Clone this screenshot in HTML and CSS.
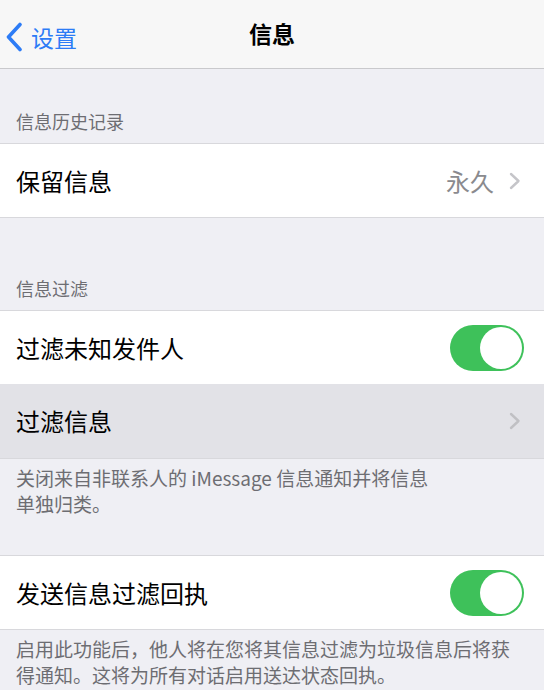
FILE: index.html
```html
<!DOCTYPE html>
<html lang="zh-CN">
<head>
<meta charset="utf-8">
<title>信息</title>
<link rel="stylesheet" href="styles.css">
</head>
<body>
<div class="screen">
  <header class="nav">
    <div class="nav-back">
      <svg class="back-icon" width="18" height="30" viewBox="0 0 18 30"><path d="M15 2.5 L3.5 15 L15 27.5" fill="none" stroke="#2d7cf6" stroke-width="3.6" stroke-linecap="round" stroke-linejoin="round"/></svg>
      <span>设置</span>
    </div>
    <div class="nav-title">信息</div>
  </header>

  <div class="section-header first">信息历史记录</div>
  <div class="group">
    <div class="row">
      <span class="label">保留信息</span>
      <span class="value">永久</span>
      <svg class="chevron" width="12" height="18" viewBox="0 0 12 18"><path d="M2 2 L9.5 9 L2 16" fill="none" stroke="#c5c5c9" stroke-width="2.4" stroke-linecap="round" stroke-linejoin="round"/></svg>
    </div>
  </div>

  <div class="section-header second">信息过滤</div>
  <div class="group">
    <div class="row">
      <span class="label">过滤未知发件人</span>
      <span class="toggle"><span class="knob"></span></span>
    </div>
    <div class="row highlighted">
      <span class="label">过滤信息</span>
      <svg class="chevron" width="12" height="18" viewBox="0 0 12 18"><path d="M2 2 L9.5 9 L2 16" fill="none" stroke="#c0c0c4" stroke-width="2.4" stroke-linecap="round" stroke-linejoin="round"/></svg>
    </div>
  </div>
  <div class="section-footer first">关闭来自非联系人的 iMessage 信息通知并将信息<br>单独归类。</div>

  <div class="group">
    <div class="row">
      <span class="label">发送信息过滤回执</span>
      <span class="toggle"><span class="knob"></span></span>
    </div>
  </div>
  <div class="section-footer second">启用此功能后，他人将在您将其信息过滤为垃圾信息后将获得通知。这将为所有对话启用送达状态回执。</div>
</div>
</body>
</html>
```

FILE: styles.css
```css
html, body {
  margin: 0;
  padding: 0;
  background: #efeff4;
}
body {
  font-family: "Noto Sans CJK SC", "Noto Sans", sans-serif;
  color: #000;
  width: 544px;
  height: 690px;
  overflow: hidden;
}
.screen {
  display: flex;
  flex-direction: column;
}
.nav {
  height: 68px;
  background: #f7f7f7;
  border-bottom: 1px solid #c9c9cc;
  display: flex;
  align-items: center;
  justify-content: center;
  position: relative;
}
.nav-back {
  position: absolute;
  left: 5px;
  top: 21px;
  display: flex;
  align-items: center;
  gap: 8px;
  color: #2d7cf6;
  font-size: 23px;
  line-height: 30px;
}
.back-icon {
  display: block;
}
.nav-back span {
  margin-top: 1px;
}
.nav-title {
  font-size: 23px;
  font-weight: 700;
  line-height: 30px;
  margin-top: -2px;
}
.section-header {
  font-size: 18px;
  line-height: 26px;
  color: #6d6d72;
  padding: 0 16px 9px;
  display: flex;
  align-items: flex-end;
  border-bottom: 1px solid #d8d8dc;
  box-sizing: border-box;
}
.section-header.first {
  height: 75px;
}
.section-header.second {
  height: 93px;
}
.group {
  background: #fff;
  display: flex;
  flex-direction: column;
  border-bottom: 1px solid #d8d8dc;
}
.row {
  height: 73px;
  display: flex;
  align-items: center;
  padding: 0 20px 0 16px;
  box-sizing: border-box;
}
.row.highlighted {
  background: #e2e2e7;
  height: 74px;
}
.label {
  font-size: 24px;
  flex: 1;
  line-height: 30px;
}
.value {
  font-size: 24px;
  color: #8a8a8e;
  margin-right: 15px;
  line-height: 30px;
}
.chevron {
  display: block;
  margin-right: 3px;
}
.toggle {
  width: 74px;
  height: 46px;
  border-radius: 23px;
  background: #3ec15a;
  position: relative;
  flex: none;
}
.knob {
  position: absolute;
  right: 2px;
  top: 2px;
  width: 42px;
  height: 42px;
  border-radius: 50%;
  background: #fff;
}
.section-footer {
  font-size: 19px;
  line-height: 26px;
  color: #6d6d72;
  padding: 6px 16px 0;
  box-sizing: border-box;
  border-bottom: 1px solid #d8d8dc;
}
.section-footer.first {
  height: 97px;
}
.section-footer.second {
  border-bottom: none;
  padding-top: 6px;
  padding-right: 24px;
}
```
